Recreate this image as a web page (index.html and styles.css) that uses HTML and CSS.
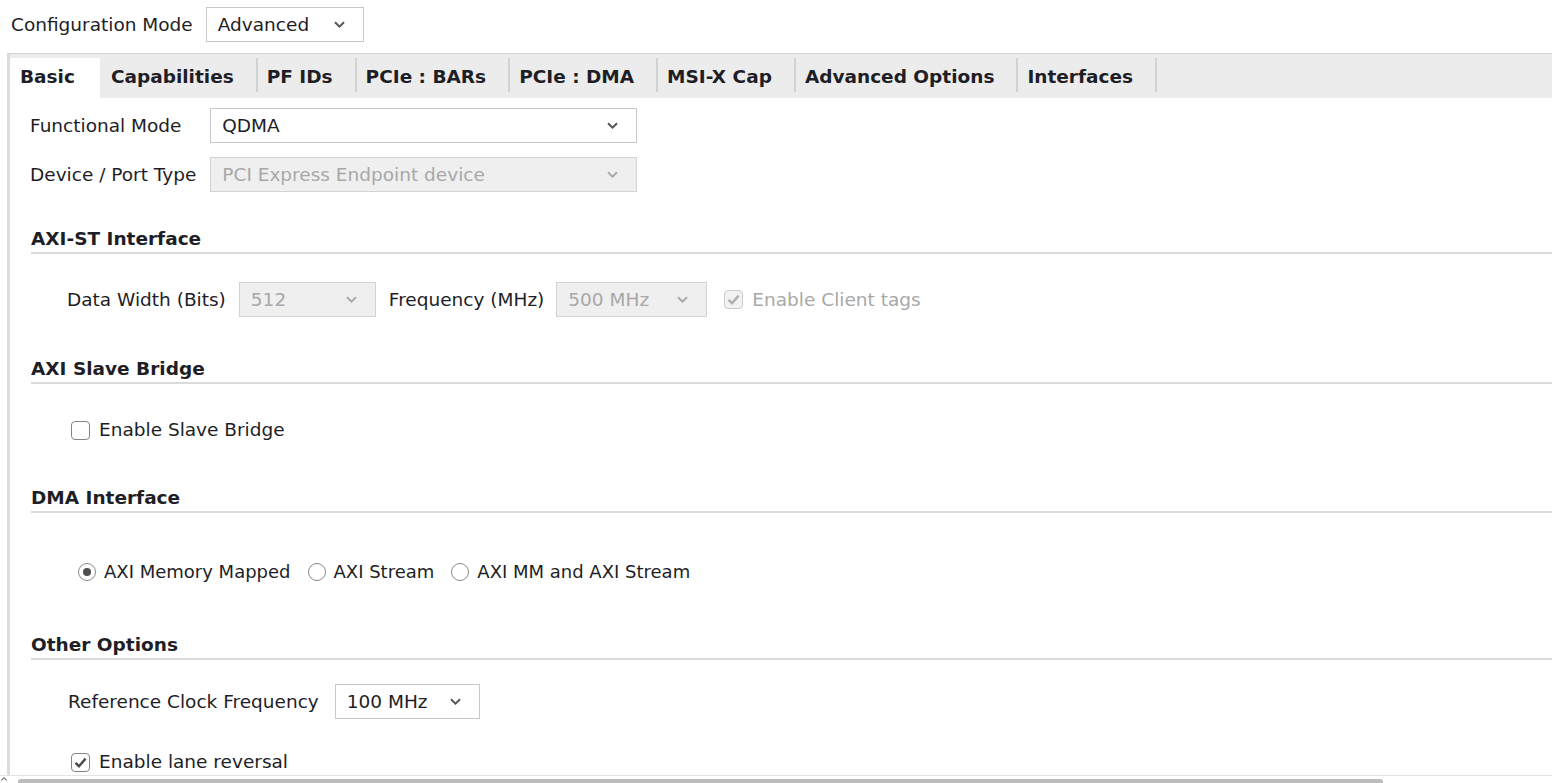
FILE: index.html
```html
<!DOCTYPE html>
<html lang="en">
<head>
    <meta charset="UTF-8">
    <meta name="viewport" content="width=device-width, initial-scale=1.0">
    <title>Customize IP - Basic</title>
    <link rel="stylesheet" href="styles.css">
</head>
<body>
    <div class="topbar">
        <span>Configuration Mode</span>
        <div class="select config-select">
            <span>Advanced</span>
            <svg class="chev" width="11" height="7" viewBox="0 0 11 7"><path d="M1 1.2 L5.5 5.6 L10 1.2"/></svg>
        </div>
    </div>

    <div class="panel">
        <div class="tabs">
            <div class="tab active">Basic</div>
            <div class="tab">Capabilities</div>
            <div class="tab">PF IDs</div>
            <div class="tab">PCIe : BARs</div>
            <div class="tab">PCIe : DMA</div>
            <div class="tab">MSI-X Cap</div>
            <div class="tab">Advanced Options</div>
            <div class="tab">Interfaces</div>
        </div>

        <div class="tab-body">
            <!-- Top level mode settings -->
            <div class="form-grid">
                <span>Functional Mode</span>
                <div class="select wide">
                    <span>QDMA</span>
                    <svg class="chev" width="11" height="7" viewBox="0 0 11 7"><path d="M1 1.2 L5.5 5.6 L10 1.2"/></svg>
                </div>
                <span>Device / Port Type</span>
                <div class="select wide disabled">
                    <span>PCI Express Endpoint device</span>
                    <svg class="chev" width="11" height="7" viewBox="0 0 11 7"><path d="M1 1.2 L5.5 5.6 L10 1.2"/></svg>
                </div>
            </div>

            <!-- AXI-ST -->
            <h2 class="section-title axi-st-title">AXI-ST Interface</h2>
            <div class="row st-row">
                <span>Data Width (Bits)</span>
                <div class="select disabled width-select">
                    <span>512</span>
                    <svg class="chev" width="11" height="7" viewBox="0 0 11 7"><path d="M1 1.2 L5.5 5.6 L10 1.2"/></svg>
                </div>
                <span class="freq-label">Frequency (MHz)</span>
                <div class="select disabled freq-select">
                    <span>500 MHz</span>
                    <svg class="chev" width="11" height="7" viewBox="0 0 11 7"><path d="M1 1.2 L5.5 5.6 L10 1.2"/></svg>
                </div>
                <label class="check disabled client-tags">
                    <span class="box checked"><svg width="19" height="19" viewBox="0 0 19 19"><path d="M4.5 9.8 L8 13.2 L14.6 5.6"/></svg></span>
                    <span>Enable Client tags</span>
                </label>
            </div>

            <!-- Slave bridge -->
            <h2 class="section-title slave-title">AXI Slave Bridge</h2>
            <div class="row slave-row">
                <label class="check">
                    <span class="box"></span>
                    <span>Enable Slave Bridge</span>
                </label>
            </div>

            <!-- DMA interface -->
            <h2 class="section-title dma-title">DMA Interface</h2>
            <div class="row radio-row">
                <label class="radio">
                    <span class="dot selected"></span>
                    <span>AXI Memory Mapped</span>
                </label>
                <label class="radio">
                    <span class="dot"></span>
                    <span>AXI Stream</span>
                </label>
                <label class="radio">
                    <span class="dot"></span>
                    <span>AXI MM and AXI Stream</span>
                </label>
            </div>

            <!-- Other -->
            <h2 class="section-title other-title">Other Options</h2>
            <div class="row clock-row">
                <span>Reference Clock Frequency</span>
                <div class="select clock-select">
                    <span>100 MHz</span>
                    <svg class="chev" width="11" height="7" viewBox="0 0 11 7"><path d="M1 1.2 L5.5 5.6 L10 1.2"/></svg>
                </div>
            </div>
            <div class="row lane-row">
                <label class="check">
                    <span class="box checked"><svg width="19" height="19" viewBox="0 0 19 19"><path d="M4.5 9.8 L8 13.2 L14.6 5.6"/></svg></span>
                    <span>Enable lane reversal</span>
                </label>
            </div>
        </div>
    </div>

    <div class="hscroll">
        <svg class="hscroll-arrow" width="8" height="8" viewBox="0 0 8 8"><path d="M1 5 L4 2 L7 5"/></svg>
        <div class="thumb"></div>
    </div>
</body>
</html>
```

FILE: styles.css
```css
body {
    margin: 0;
    height: 100vh;
    display: flex;
    flex-direction: column;
    overflow: hidden;
    font-family: "DejaVu Sans", sans-serif;
    font-size: 18.5px;
    line-height: 22px;
    color: #1e1e26;
    background: #fff;
}

/* top config line */
.topbar {
    display: flex;
    align-items: center;
    gap: 13px;
    padding: 7px 0 0 11px;
}

/* combo boxes */
.select {
    display: flex;
    align-items: center;
    justify-content: space-between;
    box-sizing: border-box;
    height: 35px;
    padding: 0 18px 0 11px;
    border: 1px solid #c9c9c9;
    background: #fff;
}
.select .chev path {
    fill: none;
    stroke: #555;
    stroke-width: 1.9;
}
.select.disabled {
    background: #efefef;
    border-color: #d3d3d3;
    color: #a8a8a8;
}
.select.disabled .chev path {
    stroke: #a8a8a8;
}
.config-select { width: 158px; }
.wide { width: 427px; }
.width-select { width: 137px; }
.freq-select { width: 151px; }
.clock-select { width: 145px; }

/* tab panel */
.panel {
    flex: 1;
    min-height: 0;
    margin: 11px 0 0 7px;
    border-top: 1px solid #d0d0d0;
    border-left: 3px solid #dcdcdc;
    display: flex;
    flex-direction: column;
}
.tabs {
    display: flex;
    height: 44px;
    box-sizing: border-box;
    padding-top: 4px;
    background: #ececec;
    font-weight: bold;
}
.tab {
    position: relative;
    display: flex;
    align-items: center;
    padding: 0 24px 3px 9px;
}
.tab::after {
    content: "";
    position: absolute;
    right: 0;
    top: 0;
    bottom: 6px;
    width: 2px;
    background: #d2d2d2;
}
.tab.active {
    background: #fff;
    padding: 0 25px 3px 10px;
}
.tab.active::after {
    display: none;
}
.tab.active + .tab {
    padding-left: 11px;
}

.tab-body {
    padding: 10px 0 0 20px;
}
.form-grid {
    display: grid;
    grid-template-columns: max-content max-content;
    column-gap: 14px;
    row-gap: 14px;
    align-items: center;
}

/* section headers */
.section-title {
    margin: 0 0 0 1px;
    font-size: inherit;
    font-weight: bold;
    line-height: 22px;
    padding-bottom: 2px;
    border-bottom: 2px solid #dadada;
}
.axi-st-title { margin-top: 36px; }
.slave-title { margin-top: 41px; }
.dma-title { margin-top: 46px; }
.other-title { margin-top: 51px; }

.row {
    display: flex;
    align-items: center;
}
.st-row {
    margin-top: 28px;
    padding-left: 37px;
}
.st-row .width-select { margin-left: 13px; }
.st-row .freq-label { margin-left: 13px; }
.st-row .freq-select { margin-left: 12px; }
.st-row .client-tags { margin-left: 17px; }

.slave-row {
    margin-top: 35px;
    padding-left: 41px;
}
.radio-row {
    margin-top: 48px;
    padding-left: 48px;
    gap: 17px;
    font-size: 18px;
}
.clock-row {
    margin-top: 24px;
    padding-left: 38px;
    gap: 16px;
}
.lane-row {
    margin-top: 32px;
    padding-left: 41px;
}

/* checkboxes */
.check,
.radio {
    display: flex;
    align-items: center;
    gap: 9px;
}
.box {
    width: 19px;
    height: 19px;
    box-sizing: border-box;
    border: 1.5px solid #858585;
    border-radius: 4px;
    background: #fff;
    display: flex;
    align-items: center;
    justify-content: center;
}
.box svg {
    flex: none;
}
.box path {
    fill: none;
    stroke: #4a4a4a;
    stroke-width: 2.4;
}
.check.disabled {
    color: #a8a8a8;
}
.check.disabled .box {
    border-color: #cbcbcb;
    background: #f2f2f2;
}
.check.disabled .box path {
    stroke: #b0b0b0;
}

/* radio buttons */
.radio {
    gap: 8px;
}
.dot {
    width: 18px;
    height: 18px;
    box-sizing: border-box;
    border: 1.5px solid #888;
    border-radius: 50%;
    background: #fff;
    display: flex;
    align-items: center;
    justify-content: center;
}
.dot.selected::before {
    content: "";
    width: 8px;
    height: 8px;
    border-radius: 50%;
    background: #4d4d4d;
}

/* horizontal scroll bar */
.hscroll {
    height: 8px;
    box-sizing: border-box;
    border-top: 1px solid #e4e4e4;
    display: flex;
    align-items: flex-end;
}
.hscroll-arrow {
    width: 8px;
    height: 7px;
    margin-right: 10px;
}
.hscroll-arrow path {
    fill: none;
    stroke: #666;
    stroke-width: 1.2;
}
.thumb {
    width: 1365px;
    height: 4px;
    background: #bcbcbc;
    border-radius: 3px 3px 0 0;
}
```
